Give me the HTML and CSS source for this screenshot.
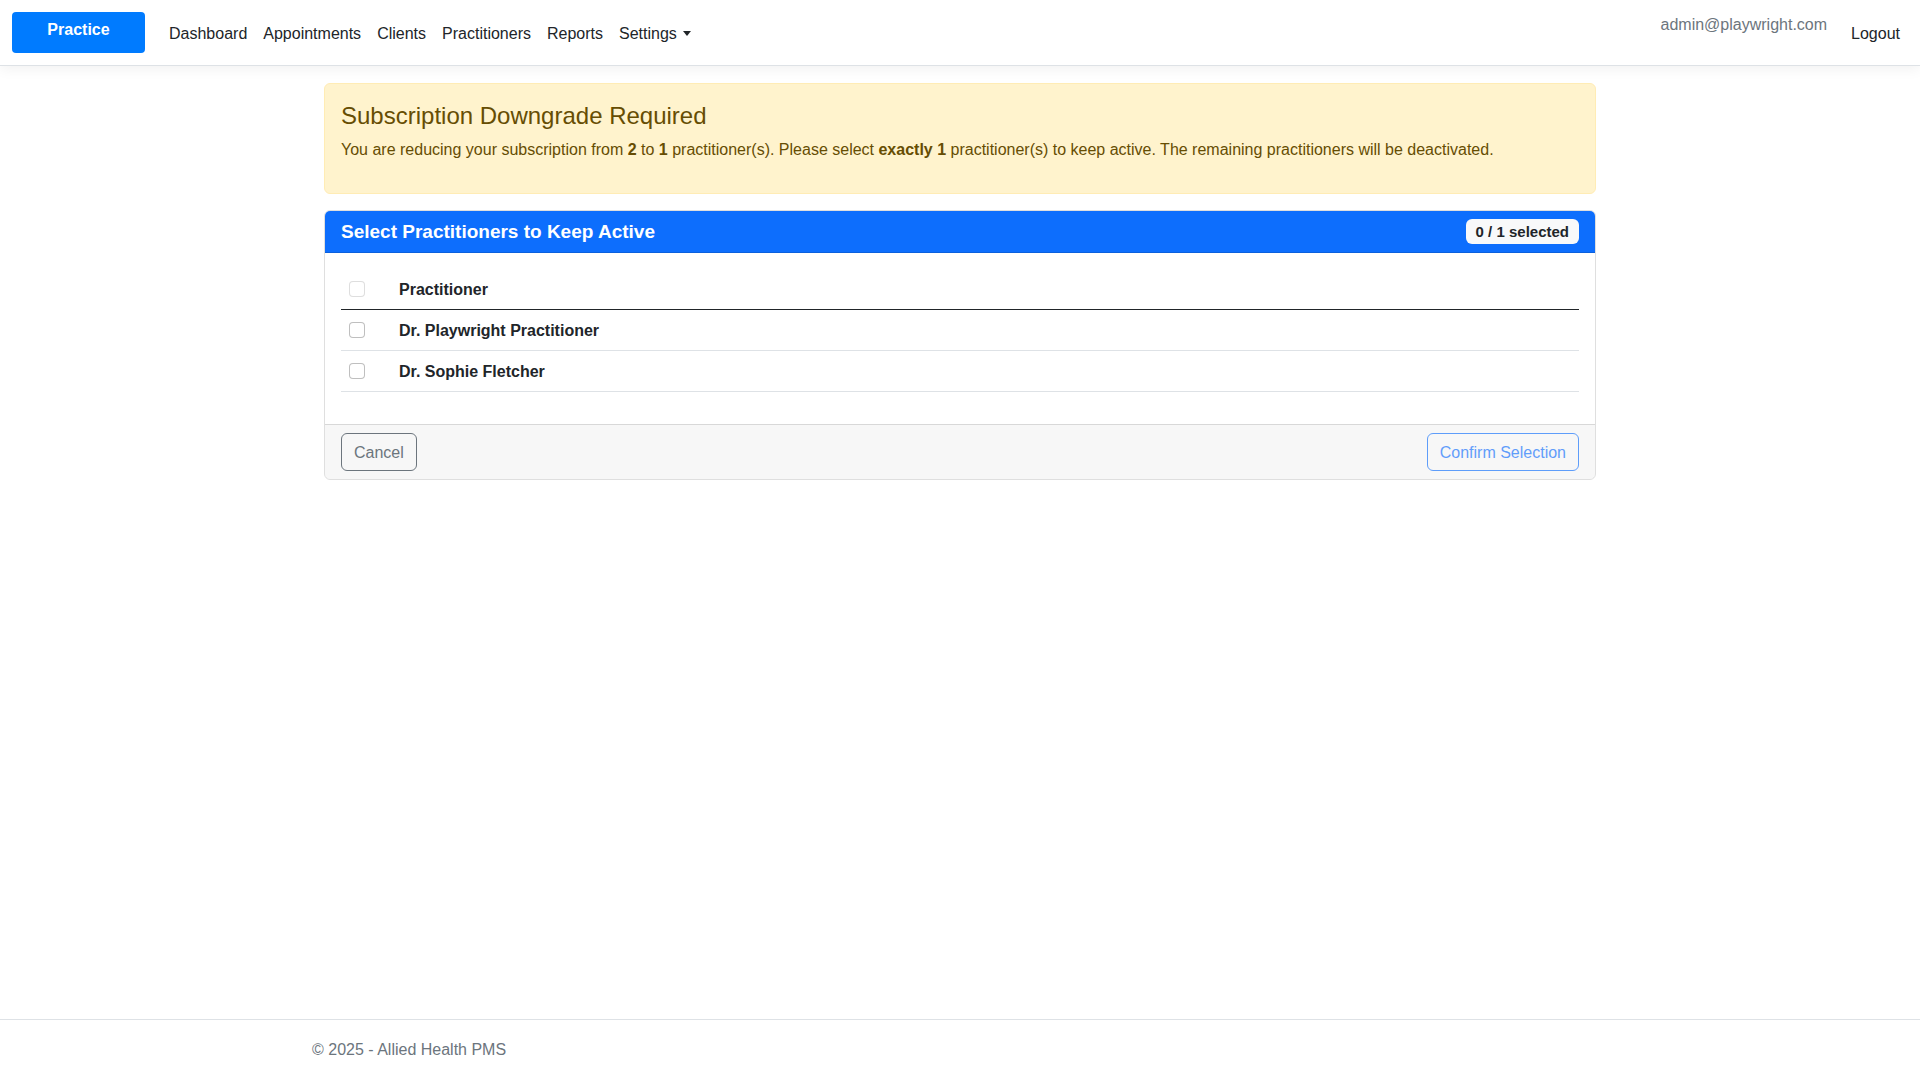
FILE: index.html
```html
<!DOCTYPE html>
<html lang="en">
	<head>
		<meta charset="UTF-8" />
		<meta name="viewport" content="width=device-width, initial-scale=1.0" />
		<title>Subscription Downgrade - Allied Health PMS</title>
		<link rel="stylesheet" href="styles.css">
	</head>
	<body>
		<header class="navbar">
			<a class="brand" href="#">Practice</a>
			<ul class="nav-main">
				<li><a class="nav-link" href="#">Dashboard</a></li>
				<li><a class="nav-link" href="#">Appointments</a></li>
				<li><a class="nav-link" href="#">Clients</a></li>
				<li><a class="nav-link" href="#">Practitioners</a></li>
				<li><a class="nav-link" href="#">Reports</a></li>
				<li><a class="nav-link dropdown-toggle" href="#">Settings</a></li>
			</ul>
			<div class="nav-user">
				<span class="navbar-text">admin@playwright.com</span>
				<a class="nav-link" href="#">Logout</a>
			</div>
		</header>

		<div class="container">
			<main class="page">
				<div class="alert">
					<h4>Subscription Downgrade Required</h4>
					<p>
						You are reducing your subscription from <strong>2</strong> to <strong>1</strong> practitioner(s).
						Please select <strong>exactly 1</strong> practitioner(s) to keep active. The remaining practitioners will be deactivated.
					</p>
				</div>

				<div class="card">
					<div class="card-header">
						<h5>Select Practitioners to Keep Active</h5>
						<span class="badge" id="count">0 / 1 selected</span>
					</div>
					<div class="card-body">
						<table class="table">
							<thead>
								<tr>
									<th class="col-check"><input type="checkbox" class="check" disabled /></th>
									<th>Practitioner</th>
								</tr>
							</thead>
							<tbody>
								<tr>
									<td class="col-check"><input type="checkbox" class="check pick" /></td>
									<td class="name">Dr. Playwright Practitioner</td>
								</tr>
								<tr>
									<td class="col-check"><input type="checkbox" class="check pick" /></td>
									<td class="name">Dr. Sophie Fletcher</td>
								</tr>
							</tbody>
						</table>
					</div>
					<div class="card-footer">
						<button class="btn btn-secondary">Cancel</button>
						<button class="btn btn-primary" id="confirm" disabled>Confirm Selection</button>
					</div>
				</div>
			</main>
		</div>

		<footer class="footer">
			<div class="container">&copy; 2025 - Allied Health PMS</div>
		</footer>

		<script>
			const picks = document.querySelectorAll('.pick')
			const updateCount = () => {
				var n = 0
				picks.forEach((p) => { if (p.checked) n++ })
				document.getElementById('count').textContent = n + ' / 1 selected'
				document.getElementById('confirm').disabled = n !== 1
			}
			picks.forEach((p) => p.addEventListener('change', updateCount))
		</script>
	</body>
</html>
```

FILE: styles.css
```css
* {
	box-sizing: border-box;
}

body {
	font-family: 'Liberation Sans', Arial, sans-serif;
	font-size: 16px;
	line-height: 1.5;
	color: #212529;
	background-color: #ffffff;
	margin: 0;
	min-height: 100vh;
	display: flex;
	flex-direction: column;
}

a {
	text-decoration: none;
}

/* navbar */

.navbar {
	display: flex;
	align-items: center;
	padding: 12px 12px;
	height: 66px;
	border-bottom: 1px solid #dee2e6;
	box-shadow: 0 4px 12px rgba(0, 0, 0, 0.05);
	margin-bottom: 16px;
}

.brand {
	display: flex;
	justify-content: center;
	align-items: center;
	width: 133px;
	height: 41px;
	padding-bottom: 5px;
	margin-right: 16px;
	background-color: #007bff;
	border-radius: 4px;
	color: #ffffff;
	font-family: 'Liberation Sans', Arial, sans-serif;
	font-weight: bold;
	font-size: 16px;
}

.nav-main {
	display: flex;
	list-style: none;
	margin: 0;
	padding: 0;
	flex: 1;
}

.nav-link {
	display: block;
	padding: 9px 8px 7px;
	color: #212529;
}

.dropdown-toggle::after {
	content: '';
	display: inline-block;
	margin-left: 6px;
	vertical-align: 3px;
	border-top: 5px solid;
	border-left: 4px solid transparent;
	border-right: 4px solid transparent;
}

.nav-user {
	display: flex;
	align-items: flex-start;
}

.navbar-text {
	color: #6c757d;
	margin-top: -2px;
	margin-right: 16px;
}

.nav-user .nav-link {
	margin-top: -4px;
	padding-top: 11px;
	padding-bottom: 5px;
}

/* page */

.container {
	width: 100%;
	max-width: 1320px;
	margin: 0 auto;
	padding: 0 12px;
}

.page {
	padding: 0 12px 16px;
}

.alert {
	background-color: #fff3cd;
	border: 1px solid #ffecb5;
	border-radius: 6px;
	color: #664d03;
	padding: 18px 16px 16px;
	margin-top: 1px;
	margin-bottom: 16px;
}

.alert h4 {
	font-size: 24px;
	font-weight: 500;
	line-height: 1.2;
	margin: 0 0 7px;
	color: #664d03;
}

.alert p {
	margin: 0 0 15px;
}

.alert strong {
	font-weight: bold;
}

.card {
	border: 1px solid rgba(0, 0, 0, 0.125);
	border-radius: 6px;
	overflow: hidden;
}

.card-header {
	display: flex;
	justify-content: space-between;
	align-items: center;
	background-color: #0d6efd;
	color: #ffffff;
	padding: 8px 16px;
	border-bottom: 1px solid rgba(0, 0, 0, 0.125);
}

.card-header h5 {
	margin: 0;
	padding-top: 1px;
	font-size: 19px;
	font-weight: bold;
	line-height: 23px;
}

.badge {
	background-color: #f8f9fa;
	color: #212529;
	font-size: 15px;
	font-weight: bold;
	line-height: 1;
	padding: 5px 10px;
	border-radius: 6px;
}

.card-body {
	padding: 16px;
}

.table {
	width: 100%;
	border-collapse: collapse;
	margin-bottom: 16px;
}

.table th,
.table td {
	text-align: left;
	padding: 9px 8px 7px;
	border-bottom: 1px solid #dee2e6;
	vertical-align: middle;
}

.table thead th {
	border-bottom: 1px solid #212529;
	font-weight: bold;
}

.table .col-check {
	width: 50px;
	line-height: 0;
	padding-top: 8px;
	padding-bottom: 8px;
}

.table .name {
	font-weight: bold;
}

.check {
	appearance: none;
	width: 16px;
	height: 16px;
	margin: 0;
	border: 1px solid rgba(0, 0, 0, 0.25);
	border-radius: 4px;
	background-color: #ffffff;
	vertical-align: middle;
	cursor: pointer;
}

.check:checked {
	background-color: #0d6efd;
	border-color: #0d6efd;
}

.check:disabled {
	opacity: 0.5;
	cursor: default;
}

.card-footer {
	display: flex;
	justify-content: space-between;
	padding: 8px 16px;
	background-color: rgba(0, 0, 0, 0.03);
	border-top: 1px solid rgba(0, 0, 0, 0.125);
}

.btn {
	font-family: inherit;
	font-size: 16px;
	line-height: 1.5;
	padding: 7px 12px 5px;
	background-color: transparent;
	border: 1px solid;
	border-radius: 6px;
	cursor: pointer;
}

.btn-secondary {
	color: #6c757d;
	border-color: #6c757d;
}

.btn-primary {
	color: #0d6efd;
	border-color: #0d6efd;
}

.btn:disabled {
	opacity: 0.65;
	cursor: default;
}

/* footer */

.footer {
	margin-top: auto;
	border-top: 1px solid #dee2e6;
	color: #6c757d;
	line-height: 60px;
	white-space: nowrap;
}
```
